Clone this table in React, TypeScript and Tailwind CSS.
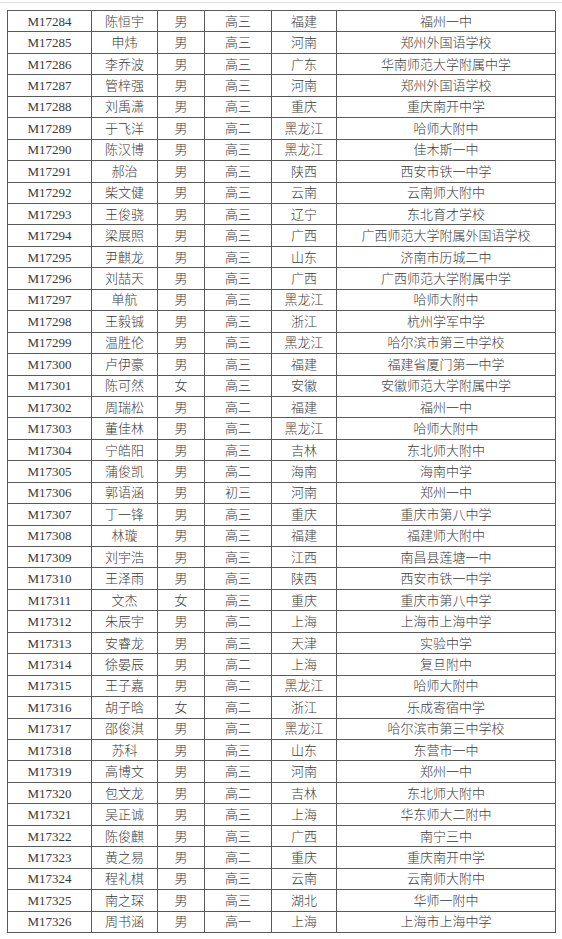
const rows: [string, string, string, string, string, string][] = [
  ["M17284", "陈恒宇", "男", "高三", "福建", "福州一中"],
  ["M17285", "申炜", "男", "高三", "河南", "郑州外国语学校"],
  ["M17286", "李乔波", "男", "高三", "广东", "华南师范大学附属中学"],
  ["M17287", "管梓强", "男", "高三", "河南", "郑州外国语学校"],
  ["M17288", "刘禹潇", "男", "高三", "重庆", "重庆南开中学"],
  ["M17289", "于飞洋", "男", "高二", "黑龙江", "哈师大附中"],
  ["M17290", "陈汉博", "男", "高三", "黑龙江", "佳木斯一中"],
  ["M17291", "郝治", "男", "高三", "陕西", "西安市铁一中学"],
  ["M17292", "柴文健", "男", "高三", "云南", "云南师大附中"],
  ["M17293", "王俊骁", "男", "高三", "辽宁", "东北育才学校"],
  ["M17294", "梁展照", "男", "高三", "广西", "广西师范大学附属外国语学校"],
  ["M17295", "尹麒龙", "男", "高三", "山东", "济南市历城二中"],
  ["M17296", "刘喆天", "男", "高三", "广西", "广西师范大学附属中学"],
  ["M17297", "单航", "男", "高三", "黑龙江", "哈师大附中"],
  ["M17298", "王毅铖", "男", "高三", "浙江", "杭州学军中学"],
  ["M17299", "温胜伦", "男", "高三", "黑龙江", "哈尔滨市第三中学校"],
  ["M17300", "卢伊豪", "男", "高三", "福建", "福建省厦门第一中学"],
  ["M17301", "陈可然", "女", "高三", "安徽", "安徽师范大学附属中学"],
  ["M17302", "周瑞松", "男", "高二", "福建", "福州一中"],
  ["M17303", "董佳林", "男", "高二", "黑龙江", "哈师大附中"],
  ["M17304", "宁皓阳", "男", "高三", "吉林", "东北师大附中"],
  ["M17305", "蒲俊凯", "男", "高二", "海南", "海南中学"],
  ["M17306", "郭语涵", "男", "初三", "河南", "郑州一中"],
  ["M17307", "丁一锋", "男", "高三", "重庆", "重庆市第八中学"],
  ["M17308", "林璇", "男", "高三", "福建", "福建师大附中"],
  ["M17309", "刘宇浩", "男", "高三", "江西", "南昌县莲塘一中"],
  ["M17310", "王泽雨", "男", "高三", "陕西", "西安市铁一中学"],
  ["M17311", "文杰", "女", "高三", "重庆", "重庆市第八中学"],
  ["M17312", "朱辰宇", "男", "高二", "上海", "上海市上海中学"],
  ["M17313", "安睿龙", "男", "高三", "天津", "实验中学"],
  ["M17314", "徐晏辰", "男", "高二", "上海", "复旦附中"],
  ["M17315", "王子嘉", "男", "高二", "黑龙江", "哈师大附中"],
  ["M17316", "胡子晗", "女", "高二", "浙江", "乐成寄宿中学"],
  ["M17317", "邵俊淇", "男", "高二", "黑龙江", "哈尔滨市第三中学校"],
  ["M17318", "苏科", "男", "高三", "山东", "东营市一中"],
  ["M17319", "高博文", "男", "高三", "河南", "郑州一中"],
  ["M17320", "包文龙", "男", "高二", "吉林", "东北师大附中"],
  ["M17321", "吴正诚", "男", "高三", "上海", "华东师大二附中"],
  ["M17322", "陈俊麒", "男", "高三", "广西", "南宁三中"],
  ["M17323", "黄之易", "男", "高二", "重庆", "重庆南开中学"],
  ["M17324", "程礼棋", "男", "高三", "云南", "云南师大附中"],
  ["M17325", "南之琛", "男", "高三", "湖北", "华师一附中"],
  ["M17326", "周书涵", "男", "高一", "上海", "上海市上海中学"],
];

export default function App() {
  return (
    <div
      className="w-[562px] h-[939px] bg-white overflow-hidden text-[13px] font-light text-[#3a3a3a]"
      style={{ fontFamily: '"Liberation Serif", "Noto Sans CJK SC", serif' }}
    >
      {/* faint rule above the table */}
      <div className="mt-[2px] h-px bg-[#e2e2e2]" />

      <div className="ml-[7px] mt-[7px] w-[548px] h-[923px] grid grid-cols-[84px_66px_47px_67px_65px_219px] grid-rows-[repeat(43,minmax(0,1fr))] border-l border-t border-[#5a5a5a]">
        {rows.map((row) =>
          row.map((cell, i) => (
            <div
              key={row[0] + i}
              className="flex items-center justify-center border-r border-b border-[#5a5a5a] leading-none whitespace-nowrap"
            >
              {cell}
            </div>
          ))
        )}
      </div>
    </div>
  );
}
